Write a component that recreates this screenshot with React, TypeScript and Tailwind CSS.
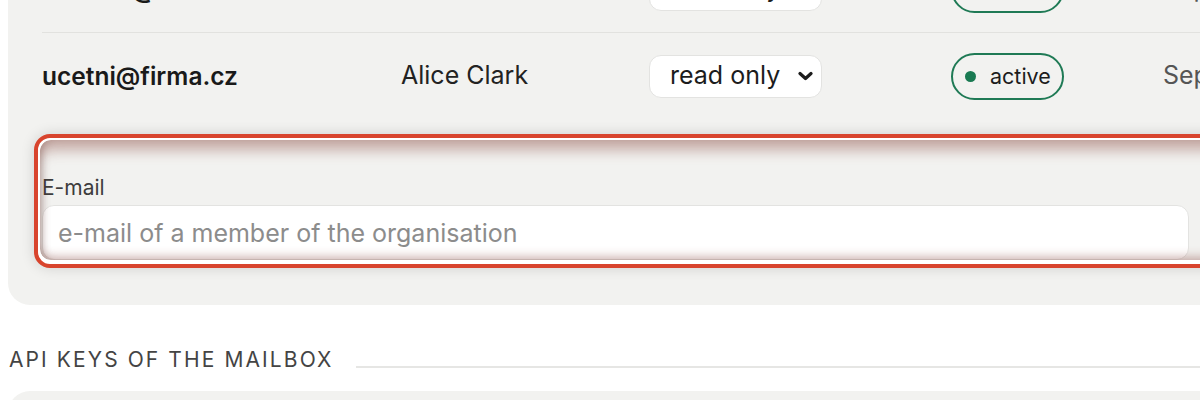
import React from "react"

type Member = { email: string; name: string; role: string; since: string }

const members: Member[] = [
  { email: "obchod@firma.cz", name: "Peter Novak", role: "read only", since: "Sep 12, 2024" },
  { email: "ucetni@firma.cz", name: "Alice Clark", role: "read only", since: "Sep 18, 2024" },
]

function RoleSelect({ value }: { value: string }) {
  return (
    <div className="flex h-[43px] w-[173px] items-center justify-between rounded-[12px] border border-[#e3e3e1] bg-white pl-[20px] pr-[8px] text-[25px] text-[#1c1c1c]">
      <span>{value}</span>
      <svg className="h-[10px] w-[15px]" viewBox="0 0 15 10" fill="none" stroke="#1c1c1c" strokeWidth={3.2} strokeLinecap="round" strokeLinejoin="round">
        <path d="M2 2.5l5.5 5 5.5-5" />
      </svg>
    </div>
  )
}

function StatusBadge() {
  return (
    <div className="flex h-[47px] w-[113px] items-center gap-[14px] rounded-full border-2 border-[#1f7a55] pl-[12px] text-[21.5px] text-[#1c1c1c]">
      <span className="h-[11px] w-[11px] rounded-full bg-[#1a7a52]" />
      <span>active</span>
    </div>
  )
}

function MemberRow({ m, last }: { m: Member; last?: boolean }) {
  return (
    <div
      className={
        "grid grid-cols-[359px_248px_302px_212px_1fr] items-center " +
        (last ? "h-[86px]" : "h-[87px] border-b border-[#e2e2df]")
      }
    >
      <span className="text-[24.5px] font-semibold text-[#1a1a1a]">{m.email}</span>
      <span className="text-[25px] text-[#222]">{m.name}</span>
      <RoleSelect value={m.role} />
      <StatusBadge />
      <span className="whitespace-nowrap text-[25px] text-[#555]">{m.since}</span>
    </div>
  )
}

export default function App() {
  return (
    <div className="h-[400px] w-[1200px] overflow-hidden bg-white font-['Inter',sans-serif]">
      {/* Members panel */}
      <div className="-mt-[54px] ml-2 w-[1240px] rounded-bl-[22px] bg-[#f2f2f0] pb-[37px] pl-[34px]">
        {members.map((m, i) => (
          <MemberRow key={m.email} m={m} last={i === members.length - 1} />
        ))}

        {/* Add member form, highlighted */}
        <div className="-ml-[8px] mt-[15px] rounded-[16px] border-4 border-[#d8442d] bg-white p-[2px] pb-[4px] shadow-[0_0_14px_rgba(0,0,0,0.14)]">
          <div className="relative flex gap-[14px] overflow-hidden rounded-[11px] bg-[#f2f2f0] pl-[2px] pt-[34px]">
            <div className="flex w-[1147px] shrink-0 flex-col">
              <label className="mb-[3px] text-[21px] leading-[28px] text-[#3d3d3d]">E-mail</label>
              <input
                className="h-[55px] rounded-[12px] border border-[#e3e3e1] bg-white px-[15px] text-[25px] text-[#1c1c1c] outline-none placeholder:text-[#8c8c8c]"
                placeholder="e-mail of a member of the organisation"
              />
            </div>
            <div className="flex w-[200px] shrink-0 flex-col">
              <label className="mb-[3px] text-[21px] leading-[28px] text-[#3d3d3d]">Role</label>
              <div className="h-[55px] rounded-[12px] border border-[#e3e3e1] bg-white" />
            </div>
            <div className="pointer-events-none absolute inset-0 rounded-[11px] shadow-[inset_0_14px_14px_-4px_rgba(130,60,50,0.4),inset_0_-8px_10px_-4px_rgba(130,60,50,0.32),inset_6px_0_8px_-4px_rgba(90,60,55,0.3)]" />
          </div>
        </div>
      </div>

      {/* API keys section */}
      <div className="mt-[39px] flex items-center gap-[22px] pl-[9px]">
        <h2 className="whitespace-nowrap text-[21px] uppercase tracking-[0.1em] text-[#444]">API keys of the mailbox</h2>
        <div className="mt-[14px] h-[2px] flex-1 bg-[#e6e6e4]" />
      </div>
      <div className="ml-2 mt-[15px] h-[60px] w-[1240px] rounded-tl-[22px] bg-[#f2f2f0]" />
    </div>
  )
}
